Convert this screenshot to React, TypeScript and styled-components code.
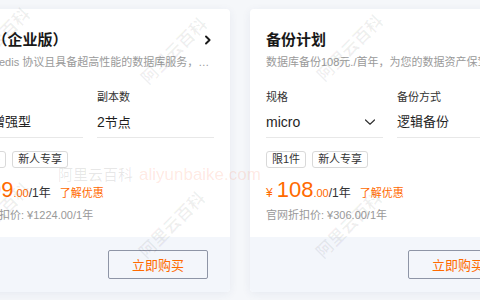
import React from "react";
import styled, { createGlobalStyle } from "styled-components";

const Global = createGlobalStyle`
  html, body { margin: 0; padding: 0; background: #f5f7fa; overflow: hidden; }
  body { font-family: "Liberation Sans", "Noto Sans CJK SC", sans-serif; }
  * { box-sizing: border-box; }
`;

const Page = styled.div`
  position: relative;
  width: 480px;
  height: 300px;
  overflow: hidden;
  padding-top: 9px;
  background: #f5f7fa;
`;

const Track = styled.div`
  display: flex;
  gap: 20px;
  margin-left: -50px;
`;

const Card = styled.div`
  flex: 0 0 280px;
  width: 280px;
  height: 283px;
  background: #fff;
  border-radius: 4px;
  box-shadow: 0 2px 10px rgba(40, 60, 110, 0.07);
  display: flex;
  flex-direction: column;
  overflow: hidden;
`;

const Body = styled.div`
  padding: 21px 16px 14px 16px;
`;

const TitleRow = styled.div`
  display: flex;
  align-items: center;
  justify-content: space-between;
  height: 20px;
`;

const Title = styled.div`
  font-size: 15px;
  font-weight: 700;
  color: #181818;
  line-height: 20px;
  white-space: nowrap;
`;

const Desc = styled.div`
  margin-top: 4px;
  font-size: 11px;
  line-height: 16px;
  color: #9a9a9a;
  white-space: nowrap;
  overflow: hidden;
  text-overflow: ellipsis;
`;

const Specs = styled.div`
  display: grid;
  grid-template-columns: 1fr 1fr;
  column-gap: 14px;
  margin-top: 19px;
`;

const Spec = styled.div`
  display: flex;
  flex-direction: column;
`;

const SpecLabel = styled.div`
  font-size: 11px;
  line-height: 16px;
  color: #333;
`;

const SpecValue = styled.div`
  margin-top: 7px;
  height: 26px;
  display: flex;
  align-items: flex-start;
  justify-content: space-between;
  padding-right: 7px;
  border-bottom: 1px solid #e8e8e8;
  font-size: 13px;
  line-height: 20px;
  color: #1f1f1f;
`;

const Latin = styled.span<{ $size: number }>`
  font-size: ${(p) => p.$size}px;
`;

const Tags = styled.div`
  display: flex;
  gap: 6px;
  margin-top: 13px;
`;

const Tag = styled.span`
  height: 17px;
  padding: 0 5px;
  border: 1px solid #d9d9d9;
  border-radius: 3px;
  font-size: 11px;
  line-height: 15px;
  color: #333;
`;

const PriceRow = styled.div`
  margin-top: 10px;
  height: 24px;
  line-height: 24px;
  display: flex;
  align-items: baseline;
  white-space: nowrap;
`;

const Yen = styled.span`
  font-size: 12px;
  color: #ff6a00;
  margin-right: 4px;
`;

const Big = styled.span`
  font-size: 22px;
  color: #ff6a00;
`;

const Cents = styled.span`
  font-size: 11px;
  color: #ff6a00;
`;

const Unit = styled.span`
  font-size: 12px;
  color: #333;
`;

const Promo = styled.span`
  margin-left: 9px;
  font-size: 11px;
  color: #ff6a00;
`;

const Original = styled.div`
  margin-top: 5px;
  font-size: 11px;
  line-height: 16px;
  color: #999;
  white-space: nowrap;
`;

const Footer = styled.div`
  height: 55px;
  background: #f3f6fb;
  display: flex;
  justify-content: flex-end;
  align-items: center;
  padding-right: 22px;
`;

const BuyButton = styled.button`
  width: 100px;
  height: 29px;
  border: 1px solid #8e95a6;
  border-radius: 2px;
  background: transparent;
  color: #ff6a00;
  font-family: inherit;
  font-size: 13px;
  padding: 0;
  cursor: pointer;
`;

const Overlay = styled.div`
  position: absolute;
  inset: 0;
  pointer-events: none;
`;

const Diagonal = styled.span<{ $x: number; $y: number }>`
  position: absolute;
  left: ${(p) => p.$x}px;
  top: ${(p) => p.$y}px;
  transform: translate(-50%, -50%) rotate(-45deg);
  font-size: 17px;
  font-weight: 700;
  color: rgba(0, 0, 0, 0.06);
  white-space: nowrap;
`;

const Banner = styled.div`
  position: absolute;
  left: 58px;
  top: 163px;
  display: flex;
  align-items: baseline;
  gap: 6px;
  white-space: nowrap;
`;

const BannerCn = styled.span`
  font-size: 15px;
  color: rgba(0, 0, 0, 0.1);
`;

const BannerEn = styled.span`
  font-size: 17px;
  color: rgba(255, 100, 50, 0.14);
`;

const ChevronRight = () => (
  <svg width="12" height="12" viewBox="0 0 12 12" fill="none">
    <path d="M4 2.5 L7.6 6 L4 9.5" stroke="#1a1a1a" strokeWidth="1.9" strokeLinecap="round" strokeLinejoin="round" />
  </svg>
);

const ChevronDown = () => (
  <svg width="12" height="12" viewBox="0 0 12 12" fill="none" style={{ marginTop: 4 }}>
    <path d="M1.5 4 L6 8.2 L10.5 4" stroke="#333" strokeWidth="1.2" strokeLinecap="round" strokeLinejoin="round" />
  </svg>
);

type Product = {
  title: string;
  desc: string;
  specLabel: string;
  spec: React.ReactNode;
  specSelect: boolean;
  optLabel: string;
  opt: React.ReactNode;
  price: string;
  original: string;
};

const products: Product[] = [
  {
    title: "Tair（企业版）",
    desc: "兼容 Redis 协议且具备超高性能的数据库服务，提供高可用高可靠的存储能力",
    specLabel: "规格",
    spec: "性能增强型",
    specSelect: false,
    optLabel: "副本数",
    opt: (
      <>
        <Latin $size={14}>2</Latin>节点
      </>
    ),
    price: "199",
    original: "官网折扣价: ¥1224.00/1年",
  },
  {
    title: "备份计划",
    desc: "数据库备份108元./首年，为您的数据资产保驾护航",
    specLabel: "规格",
    spec: <Latin $size={14}>micro</Latin>,
    specSelect: true,
    optLabel: "备份方式",
    opt: "逻辑备份",
    price: "108",
    original: "官网折扣价: ¥306.00/1年",
  },
];

export default function App() {
  return (
    <Page>
      <Global />
      <Track>
        {products.map((p) => (
          <Card key={p.title}>
            <Body>
              <TitleRow>
                <Title>{p.title}</Title>
                <ChevronRight />
              </TitleRow>
              <Desc>{p.desc}</Desc>
              <Specs>
                <Spec>
                  <SpecLabel>{p.specLabel}</SpecLabel>
                  <SpecValue>
                    <span>{p.spec}</span>
                    {p.specSelect && <ChevronDown />}
                  </SpecValue>
                </Spec>
                <Spec>
                  <SpecLabel>{p.optLabel}</SpecLabel>
                  <SpecValue>
                    <span>{p.opt}</span>
                  </SpecValue>
                </Spec>
              </Specs>
              <Tags>
                <Tag>限1件</Tag>
                <Tag>新人专享</Tag>
              </Tags>
              <PriceRow>
                <Yen>¥</Yen>
                <Big>{p.price}</Big>
                <Cents>.00</Cents>
                <Unit>/1年</Unit>
                <Promo>了解优惠</Promo>
              </PriceRow>
              <Original>{p.original}</Original>
            </Body>
            <Footer>
              <BuyButton>立即购买</BuyButton>
            </Footer>
          </Card>
        ))}
      </Track>
      <Overlay>
        <Diagonal $x={-4} $y={40}>阿里云百科</Diagonal>
        <Diagonal $x={173} $y={50}>阿里云百科</Diagonal>
        <Diagonal $x={349} $y={47}>阿里云百科</Diagonal>
        <Diagonal $x={-4} $y={215}>阿里云百科</Diagonal>
        <Diagonal $x={171} $y={224}>阿里云百科</Diagonal>
        <Diagonal $x={348} $y={224}>阿里云百科</Diagonal>
        <Banner>
          <BannerCn>阿里云百科</BannerCn>
          <BannerEn>aliyunbaike.com</BannerEn>
        </Banner>
      </Overlay>
    </Page>
  );
}
